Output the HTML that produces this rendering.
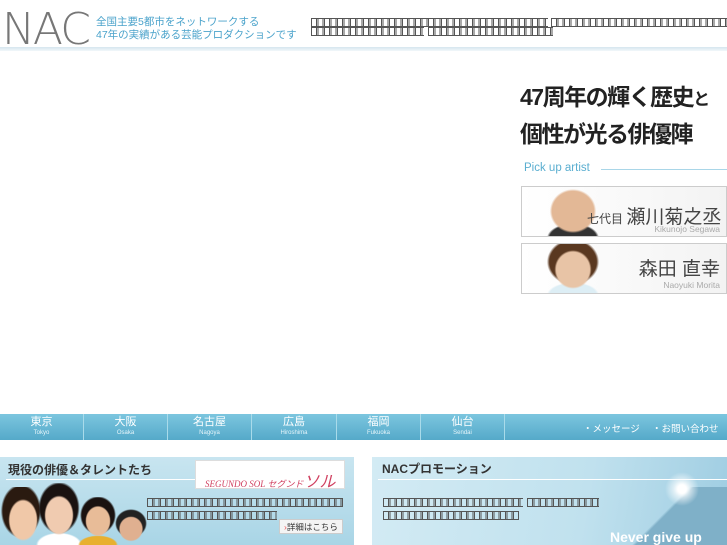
<!DOCTYPE html>
<html><head><meta charset="utf-8"><style>
*{margin:0;padding:0;box-sizing:border-box}
body{width:727px;height:545px;overflow:hidden;background:#fff;font-family:"Liberation Sans","Noto Sans CJK JP",sans-serif;position:relative}
.a{position:absolute}
.t{position:absolute;height:9px;border-top:1px solid #555;border-bottom:1px solid #555;background:repeating-linear-gradient(90deg,#555 0 1px,transparent 1px 5px,#555 5px 6px,transparent 6px 6.5px)}
.nav{top:414px;left:0;width:727px;height:26px;background:linear-gradient(#7cc6df,#55a9c9);}
.ni{position:absolute;top:0;width:84px;height:26px;text-align:center;color:#fff;border-right:1px solid #a9dbea}
.ni b{display:block;font-size:11px;line-height:13px;margin-top:2px;font-weight:normal}
.ni i{display:block;font-size:6px;line-height:8px;font-style:normal;color:#e6f5fa}
.card{left:521px;width:206px;height:51px;border:1px solid #ccc;background:linear-gradient(90deg,#fff,#f3f3f3);overflow:hidden}
</style></head><body>
<div class="a" style="left:2px;top:4px;font-size:44px;color:#777;letter-spacing:-2px;font-family:'DejaVu Sans',sans-serif;font-weight:200">NAC</div>
<div class="a" style="left:96px;top:16px;font-size:10.5px;line-height:13px;color:#4ba3cb">全国主要5都市をネットワークする<br>47年の実績がある芸能プロダクションです</div>
<div class="t" style="left:311px;top:18px;width:237px"></div>
<div class="t" style="left:551px;top:18px;width:176px"></div>
<div class="t" style="left:311px;top:27px;width:113px"></div>
<div class="t" style="left:428px;top:27px;width:125px"></div>
<div class="a" style="left:0;top:47px;width:727px;height:4px;background:linear-gradient(#d6e6ef,#f2f7fa)"></div>

<div class="a" style="left:520px;top:80px;font-size:23px;font-weight:bold;color:#222;letter-spacing:-1.5px;line-height:34px">47周年の輝く歴史<span style="font-size:17px">と</span><br>個性が光る俳優陣</div>
<div class="a" style="left:524px;top:162px;font-size:11.5px;color:#5aaed0">Pick up artist</div>
<div class="a" style="left:601px;top:169px;width:126px;height:1px;background:#a9d6e8"></div>
<div class="a card" style="top:186px">
 <div class="a" style="left:22px;top:2px;width:58px;height:49px;background:radial-gradient(ellipse 40% 45% at 50% 45%,#e3b896 0 90%,transparent 100%),radial-gradient(ellipse 45% 30% at 50% 100%,#333 0 90%,transparent 100%)"></div>
 <div class="a" style="left:65px;top:15px;font-size:12px;color:#444">七代目 <span style="font-size:19px">瀬川菊之丞</span></div>
 <div class="a" style="right:6px;top:37px;font-size:8.5px;color:#aaa">Kikunojo Segawa</div>
</div>
<div class="a card" style="top:243px">
 <div class="a" style="left:22px;top:0;width:58px;height:51px;background:radial-gradient(ellipse 32% 38% at 50% 50%,#e8c4a6 0 90%,transparent 100%),radial-gradient(ellipse 45% 45% at 50% 35%,#5a3820 0 90%,transparent 100%),radial-gradient(ellipse 45% 25% at 50% 100%,#ddeef5 0 90%,transparent 100%)"></div>
 <div class="a" style="right:6px;top:10px;font-size:19px;color:#444">森田 直幸</div>
 <div class="a" style="right:6px;top:36px;font-size:8.5px;color:#aaa">Naoyuki Morita</div>
</div>

<div class="a nav">
 <div class="ni" style="left:0"><b>東京</b><i>Tokyo</i></div>
 <div class="ni" style="left:84px"><b>大阪</b><i>Osaka</i></div>
 <div class="ni" style="left:168px"><b>名古屋</b><i>Nagoya</i></div>
 <div class="ni" style="left:252px;width:85px"><b>広島</b><i>Hiroshima</i></div>
 <div class="ni" style="left:337px"><b>福岡</b><i>Fukuoka</i></div>
 <div class="ni" style="left:421px"><b>仙台</b><i>Sendai</i></div>
 <div class="a" style="left:583px;top:7px;font-size:9.5px;color:#fff;white-space:nowrap">・メッセージ　 ・お問い合わせ</div>
</div>

<div class="a" style="left:0;top:457px;width:354px;height:88px;background:linear-gradient(#c8e5f0,#a9d5e6);overflow:hidden">
 <div class="a" style="left:8px;top:4px;font-size:12px;font-weight:bold;color:#333">現役の俳優＆タレントたち</div>
 <div class="a" style="left:6px;top:22px;width:190px;height:1px;background:#fff"></div>
 <div class="a" style="left:195px;top:3px;width:150px;height:29px;background:#fff;border:1px solid #ddd;color:#d04060;font-size:9px;font-style:italic;padding:7px 0 0 9px;font-family:'Liberation Serif',serif;white-space:nowrap">SEGUNDO SOL セグンド<span style="font-size:16px">ソル</span></div>
 <div class="t" style="left:147px;top:41px;width:196px"></div>
 <div class="t" style="left:147px;top:54px;width:130px"></div>
 <div class="a" style="left:279px;top:62px;width:64px;height:15px;background:#f4f4f4;border:1px solid #ccc;font-size:8.5px;color:#333;padding:1px 0 0 4px;white-space:nowrap"><span style="color:#e55">›</span>詳細はこちら</div>
 <div class="a" style="left:0;top:30px;width:42px;height:60px;background:radial-gradient(ellipse 35% 35% at 55% 55%,#f0c8a8 0 90%,transparent 100%),radial-gradient(ellipse 48% 45% at 50% 40%,#2a1a10 0 90%,transparent 100%)"></div>
 <div class="a" style="left:36px;top:26px;width:46px;height:62px;background:radial-gradient(ellipse 32% 32% at 50% 52%,#f0cbb0 0 90%,transparent 100%),radial-gradient(ellipse 45% 42% at 50% 40%,#1a1210 0 90%,transparent 100%),radial-gradient(ellipse 50% 20% at 50% 100%,#fff 0 90%,transparent 100%)"></div>
 <div class="a" style="left:78px;top:40px;width:40px;height:48px;background:radial-gradient(ellipse 32% 32% at 50% 50%,#e8bc98 0 90%,transparent 100%),radial-gradient(ellipse 45% 40% at 50% 38%,#1a1210 0 90%,transparent 100%),radial-gradient(ellipse 50% 20% at 50% 100%,#e8b030 0 90%,transparent 100%)"></div>
 <div class="a" style="left:112px;top:52px;width:38px;height:36px;background:radial-gradient(ellipse 32% 35% at 50% 55%,#e0b090 0 90%,transparent 100%),radial-gradient(ellipse 42% 40% at 50% 40%,#222 0 90%,transparent 100%)"></div>
</div>

<div class="a" style="left:372px;top:457px;width:355px;height:88px;background:linear-gradient(100deg,#d3ebf4 0%,#c0e1ee 60%,#9fcde2 100%);overflow:hidden">
 <div class="a" style="left:10px;top:3px;font-size:12px;font-weight:bold;color:#333">NACプロモーション</div>
 <div class="a" style="left:6px;top:22px;width:349px;height:1px;background:#fff"></div>
 <div class="a" style="left:230px;top:30px;width:125px;height:58px;background:linear-gradient(135deg,transparent 48%,#7fb0c8 50%)"></div>
 <div class="a" style="left:290px;top:12px;width:40px;height:40px;background:radial-gradient(circle,#fff 0 15%,rgba(255,255,255,0.6) 30%,transparent 60%)"></div>
 <div class="t" style="left:11px;top:41px;width:140px"></div>
 <div class="t" style="left:155px;top:41px;width:72px"></div>
 <div class="t" style="left:11px;top:54px;width:136px"></div>
 <div class="a" style="left:238px;top:72px;font-size:14px;font-weight:bold;color:#fff">Never give up</div>
</div>
</body></html>
